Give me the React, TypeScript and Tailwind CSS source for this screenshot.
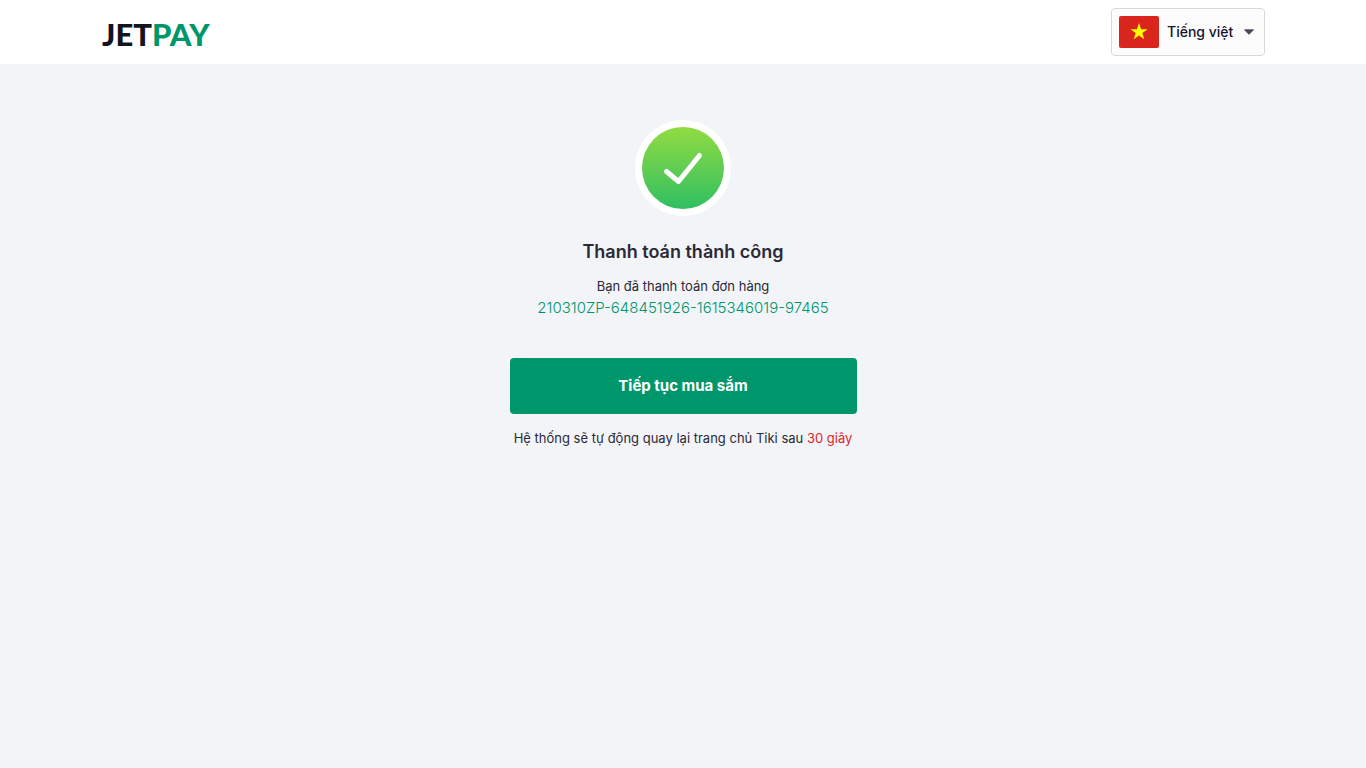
function Logo() {
  return (
    <a href="#" className="mt-1 pl-px font-['Lato',sans-serif] text-[31px] leading-10 font-black text-[#14141f]">
      JET<span className="text-[#00966b]">PAY</span>
    </a>
  );
}

function LanguagePicker() {
  return (
    <div className="relative flex h-12 items-center rounded border border-[#d5d7db] bg-[#fcfcfc] pl-[7px]">
      <svg viewBox="0 0 40 32" className="h-8 w-10 shrink-0" aria-hidden="true">
        <rect width="40" height="32" rx="2" fill="#da251d" />
        <path
          d="M20 7 L22.05 13.2 L28.6 13.2 L23.3 17.1 L25.3 23.3 L20 19.5 L14.7 23.3 L16.7 17.1 L11.4 13.2 L17.95 13.2 Z"
          fill="#ffff00"
        />
      </svg>
      <select
        aria-label="Ngôn ngữ"
        className="h-full w-[105px] appearance-none bg-transparent pl-2 font-['Inter',sans-serif] text-sm font-medium text-[#14142b]"
      >
        <option>Tiếng việt</option>
      </select>
      <svg viewBox="0 0 10 6" className="pointer-events-none absolute right-[10px] h-[6px] w-[10px]" aria-hidden="true">
        <path d="M0.8 0.3 H9.2 Q10 0.5 9.5 1.2 L5.6 5.3 Q5 5.8 4.4 5.3 L0.5 1.2 Q0 0.5 0.8 0.3 Z" fill="#4e4b59" />
      </svg>
    </div>
  );
}

function SuccessIcon() {
  return (
    <svg viewBox="0 0 96 96" className="size-24" role="img" aria-label="Thành công">
      <defs>
        <linearGradient id="success" x1="0" y1="0" x2="0" y2="1">
          <stop offset="0" stopColor="#92db42" />
          <stop offset="1" stopColor="#2fbf62" />
        </linearGradient>
      </defs>
      <circle cx="48" cy="48" r="48" fill="#fff" />
      <circle cx="48" cy="48" r="41" fill="url(#success)" />
      <path d="M31.5 51.5 L43.5 61.5 L64.5 35.5" fill="none" stroke="#fff" strokeWidth="5" strokeLinecap="round" strokeLinejoin="round" />
    </svg>
  );
}

export default function App() {
  return (
    <div className="flex min-h-screen flex-col bg-[#f2f4f8] font-['Inter',sans-serif] text-[#2a2a35]">
      <header className="bg-white px-4">
        <div className="mx-auto flex h-16 max-w-[1164px] items-center justify-between">
          <Logo />
          <LanguagePicker />
        </div>
      </header>
      <main className="mx-auto flex w-full max-w-[379px] flex-1 flex-col items-center px-4 pt-14 text-center">
        <SuccessIcon />
        <h1 className="mt-5 text-lg leading-8 font-semibold">Thanh toán thành công</h1>
        <p className="mt-2 text-[13px] leading-5">Bạn đã thanh toán đơn hàng</p>
        <p className="text-[15px] leading-6 font-light text-[#00966b]">210310ZP-648451926-1615346019-97465</p>
        <button type="button" className="mt-[38px] h-14 w-full rounded bg-[#00966b] text-[15px] font-bold text-white">
          Tiếp tục mua sắm
        </button>
        <p className="mt-[14px] text-[13px] leading-5 whitespace-nowrap">
          Hệ thống sẽ tự động quay lại trang chủ Tiki sau <span className="text-[#e01f26]">30 giây</span>
        </p>
      </main>
    </div>
  );
}
